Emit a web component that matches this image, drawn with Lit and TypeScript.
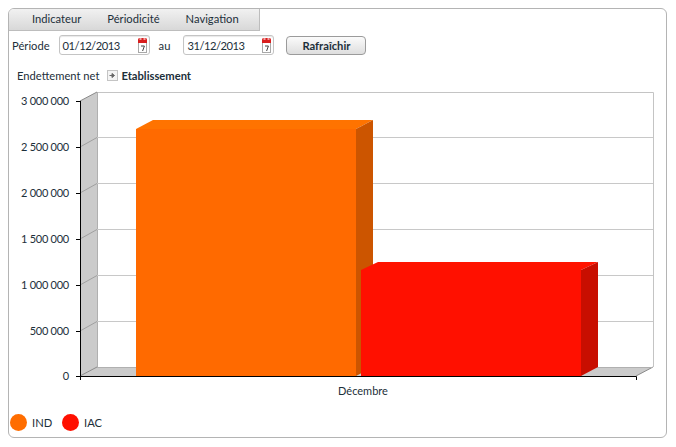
import { LitElement, html, css, svg } from "lit";
import { customElement } from "lit/decorators.js";

const calIcon = html`<svg class="cal" width="9" height="15" viewBox="0 0 9 15">
  <rect x="0.5" y="4.5" width="8" height="10" fill="#fff" stroke="#a8a8a8"/>
  <path d="M0 1.5Q0 0 1.5 0h6Q9 0 9 1.5V5H0Z" fill="#d81e1e"/>
  <rect x="1.5" y="0" width="2" height="2" fill="#f2a0a0"/>
  <rect x="5.5" y="0" width="2" height="2" fill="#f2a0a0"/>
  <path d="M3 8h3.4L4.6 13" fill="none" stroke="#444" stroke-width="1"/>
</svg>`;

const ticks = [
  { y: 101, back: 92, l: "3 000 000" },
  { y: 147, back: 137, l: "2 500 000" },
  { y: 193, back: 183, l: "2 000 000" },
  { y: 239, back: 229, l: "1 500 000" },
  { y: 285, back: 275, l: "1 000 000" },
  { y: 331, back: 321, l: "500 000" },
  { y: 376, back: 367, l: "0" },
];

const bar = (x: number, y: number, w: number, d: number, front: string, top: string, side: string) => svg`
  <rect x=${x} y=${y} width=${w} height=${376 - y} fill=${front}/>
  <polygon points="${x},${y} ${x + 17},${y - d} ${x + w + 17},${y - d} ${x + w},${y}" fill=${top}/>
  <polygon points="${x + w},${y} ${x + w + 17},${y - d} ${x + w + 17},367 ${x + w},376" fill=${side}/>`;

@customElement("app-root")
export class AppRoot extends LitElement {
  static styles = css`
    :host {
      display: block;
      width: 676px;
      height: 447px;
      padding: 8px 0 0 8px;
      box-sizing: border-box;
      font-family: "Lato", "Open Sans", sans-serif;
      font-size: 11.2px;
      color: #1c2f3a;
    }
    .card {
      width: 659px;
      height: 430px;
      box-sizing: border-box;
      border: 1px solid #b4b4b4;
      border-radius: 6px;
      position: relative;
      background: #fff;
    }
    .menu {
      width: 251px;
      height: 22px;
      box-sizing: border-box;
      display: flex;
      align-items: center;
      padding: 0 0 2px 23px;
      gap: 26px;
      background: linear-gradient(#f1f1f1, #d8d8d8);
      border-right: 1px solid #bdbdbd;
      border-bottom: 1px solid #bdbdbd;
      border-top-left-radius: 5px;
    }
    .toolbar {
      display: flex;
      align-items: center;
      height: 28px;
      padding-left: 3px;
    }
    .date {
      width: 91px;
      height: 20px;
      box-sizing: border-box;
      border: 1px solid #c4c4c4;
      border-radius: 3px;
      margin-left: 9px;
      padding: 0 2px 0 3px;
      display: flex;
      align-items: center;
      justify-content: space-between;
      letter-spacing: -0.5px;
      box-shadow: inset 0 1px 1px #e8e8e8;
    }
    .cal { display: block; }
    .au { margin: 0 13px 0 9px; }
    .au + .date { margin-left: 0; }
    .btn {
      margin-left: 12px;
      width: 80px;
      height: 19px;
      box-sizing: border-box;
      display: flex;
      align-items: center;
      justify-content: center;
      border: 1px solid #9b9b9b;
      border-radius: 4px;
      background: linear-gradient(#fbfbfb, #dedede);
      font-weight: 700;
    }
    .title {
      display: flex;
      align-items: center;
      height: 20px;
      margin-top: 6px;
      padding-left: 8px;
    }
    .arrow { margin: 1px 3px 0 8px; display: block; }
    .title b { font-weight: 700; }
    .chart {
      position: absolute;
      left: -9px;
      top: -9px;
    }
    .chart text {
      font-family: "Lato", "Open Sans", sans-serif;
      font-size: 11px;
      fill: #1c2f3a;
    }
    .chart .num { letter-spacing: -0.25px; }
    .legend {
      position: absolute;
      left: 1px;
      top: 405px;
      display: flex;
      align-items: center;
    }
    .dot {
      width: 17px;
      height: 17px;
      border-radius: 50%;
      margin-right: 5px;
    }
    .legend span { width: 30px; }
    .dot.ind { background: #ff6d00; }
    .dot.iac { background: #ff1000; }
  `;

  render() {
    return html`<div class="card">
      <div class="menu"><span>Indicateur</span><span>Périodicité</span><span>Navigation</span></div>
      <div class="toolbar">
        <span>Période</span>
        <div class="date"><span>01/12/2013</span>${calIcon}</div>
        <span class="au">au</span>
        <div class="date"><span>31/12/2013</span>${calIcon}</div>
        <div class="btn">Rafraîchir</div>
      </div>
      <div class="title">
        <span>Endettement net</span>
        <svg class="arrow" width="11" height="11" viewBox="0 0 11 11">
          <rect x="0.5" y="0.5" width="10" height="10" fill="#f4f4f4" stroke="#c4c4c4"/>
          <path d="M2.5 5.5h3M5 3.5l2.5 2L5 7.5Z" fill="#666" stroke="#666"/>
        </svg>
        <b>Etablissement</b>
      </div>
      <svg class="chart" width="668" height="400" viewBox="0 0 668 400">
        <polygon points="80,101 97,92 97,367 80,376" fill="#cbcbcb"/>
        <polygon points="80,376 97,367 653,367 636,376" fill="#cbcbcb"/>
        <path d="M97 92.5H653.5V367" fill="none" stroke="#c4c4c4"/>
        <path d="M97.5 92V367" fill="none" stroke="#b0b0b0"/>
        ${ticks.slice(1, 6).map(
          (t) => svg`<path d="M97 ${t.back + 0.5}H653" stroke="#c8c8c8" fill="none"/>
            <path d="M80 ${t.y}L97 ${t.back + 0.5}" stroke="#a0a0a0" fill="none"/>`
        )}
        <path d="M80 101L97 92M80 376L97 367M636 376L653 367" stroke="#8a8a8a" fill="none"/>
        <path d="M97 367.5H653" stroke="#b0b0b0" fill="none"/>
        ${bar(136, 129, 220, 9, "#ff6a00", "#ff7300", "#cc5500")}
        ${bar(361, 270, 220, 8, "#ff1000", "#ff1400", "#c80e00")}
        <path d="M80.5 101V380M76 376.5H636.5V380" fill="none" stroke="#000"/>
        ${ticks.map(
          (t) => svg`<path d="M76 ${t.y + 0.5}H80" stroke="#000" fill="none"/>
            <text class="num" x="69" y=${t.y + 4} text-anchor="end">${t.l}</text>`
        )}
        <text x="363" y="395" text-anchor="middle">Décembre</text>
      </svg>
      <div class="legend">
        <div class="dot ind"></div><span>IND</span>
        <div class="dot iac"></div><span>IAC</span>
      </div>
    </div>`;
  }
}
